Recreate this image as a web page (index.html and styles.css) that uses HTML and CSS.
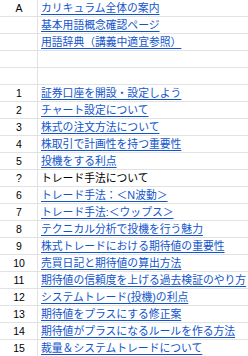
FILE: index.html
```html
<!DOCTYPE html>
<html lang="ja">
<head>
<meta charset="utf-8">
<link rel="stylesheet" href="styles.css">
</head>
<body>
<div class="sheet">
  <div class="row"><div class="num">A</div><div class="cell"><a class="link">カリキュラム全体の案内</a></div></div>
  <div class="row"><div class="num"></div><div class="cell"><a class="link">基本用語概念確認ページ</a></div></div>
  <div class="row"><div class="num"></div><div class="cell"><a class="link">用語辞典（講義中適宜参照）</a></div></div>
  <div class="row"><div class="num"></div><div class="cell"></div></div>
  <div class="row"><div class="num"></div><div class="cell"></div></div>
  <div class="row"><div class="num">1</div><div class="cell"><a class="link">証券口座を開設・設定しよう</a></div></div>
  <div class="row"><div class="num">2</div><div class="cell"><a class="link">チャート設定について</a></div></div>
  <div class="row"><div class="num">3</div><div class="cell"><a class="link">株式の注文方法について</a></div></div>
  <div class="row"><div class="num">4</div><div class="cell"><a class="link">株取引で計画性を持つ重要性</a></div></div>
  <div class="row"><div class="num">5</div><div class="cell"><a class="link">投機をする利点</a></div></div>
  <div class="row"><div class="num">?</div><div class="cell"><span class="plain">トレード手法について</span></div></div>
  <div class="row"><div class="num">6</div><div class="cell"><a class="link">トレード手法：＜N波動＞</a></div></div>
  <div class="row"><div class="num">7</div><div class="cell"><a class="link">トレード手法:＜ウップス＞</a></div></div>
  <div class="row"><div class="num">8</div><div class="cell"><a class="link">テクニカル分析で投機を行う魅力</a></div></div>
  <div class="row"><div class="num">9</div><div class="cell"><a class="link">株式トレードにおける期待値の重要性</a></div></div>
  <div class="row"><div class="num">10</div><div class="cell"><a class="link">売買日記と期待値の算出方法</a></div></div>
  <div class="row"><div class="num">11</div><div class="cell"><a class="link">期待値の信頼度を上げる過去検証のやり方</a></div></div>
  <div class="row"><div class="num">12</div><div class="cell"><a class="link">システムトレード(投機)の利点</a></div></div>
  <div class="row"><div class="num">13</div><div class="cell"><a class="link">期待値をプラスにする修正案</a></div></div>
  <div class="row"><div class="num">14</div><div class="cell"><a class="link">期待値がプラスになるルールを作る方法</a></div></div>
  <div class="row"><div class="num">15</div><div class="cell"><a class="link">裁量＆システムトレードについて</a></div></div>
</div>
</body>
</html>
```
FILE: styles.css
```css
html, body {
  margin: 0;
  padding: 0;
  background: #ffffff;
}
body {
  width: 248px;
  height: 356px;
  overflow: hidden;
}
.sheet {
  display: flex;
  flex-direction: column;
}
.row {
  display: grid;
  grid-template-columns: 38px 1fr;
  height: 17px;
  box-sizing: border-box;
  border-bottom: 1px solid #e2e2e2;
}
.num {
  border-right: 1px solid #e2e2e2;
  font-family: "Liberation Sans", Arial, sans-serif;
  font-size: 10.5px;
  line-height: 16px;
  text-align: center;
  color: #000;
  padding-left: 1px;
}
.cell {
  padding-left: 3px;
  white-space: nowrap;
  overflow: visible;
  font-family: "Liberation Sans", "Noto Sans CJK JP", sans-serif;
  font-size: 10.8px;
  line-height: 16px;
}
.link {
  color: #1155cc;
  text-decoration: underline;
  text-underline-offset: 1.5px;
}
.plain {
  color: #000;
}
```
